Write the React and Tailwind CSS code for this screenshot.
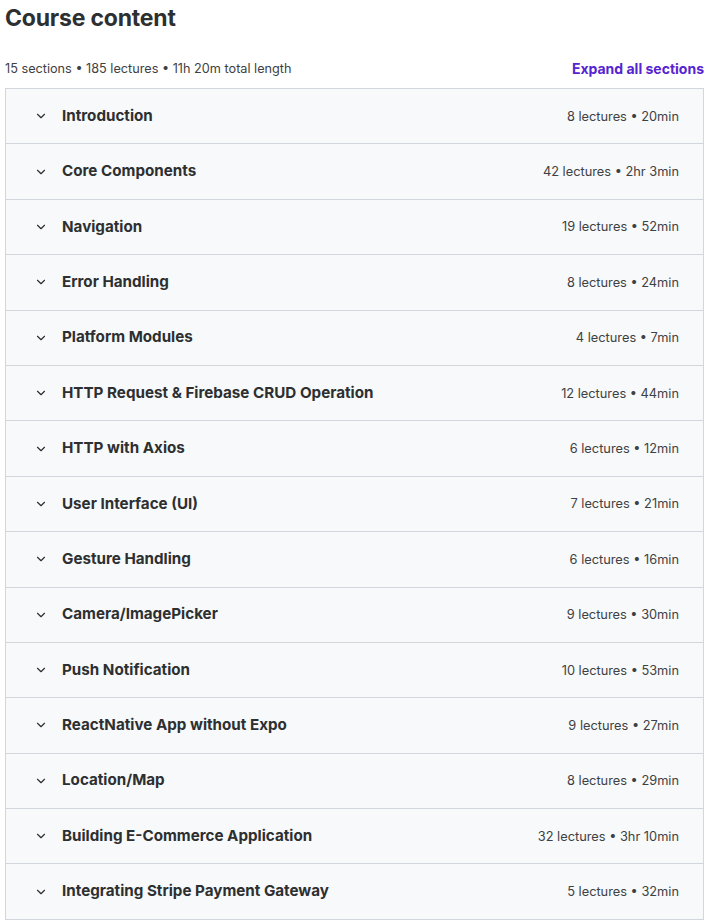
import React from 'react';
import { ChevronDown } from 'lucide-react';

const sections = [
  ['Introduction', '8 lectures • 20min'],
  ['Core Components', '42 lectures • 2hr 3min'],
  ['Navigation', '19 lectures • 52min'],
  ['Error Handling', '8 lectures • 24min'],
  ['Platform Modules', '4 lectures • 7min'],
  ['HTTP Request & Firebase CRUD Operation', '12 lectures • 44min'],
  ['HTTP with Axios', '6 lectures • 12min'],
  ['User Interface (UI)', '7 lectures • 21min'],
  ['Gesture Handling', '6 lectures • 16min'],
  ['Camera/ImagePicker', '9 lectures • 30min'],
  ['Push Notification', '10 lectures • 53min'],
  ['ReactNative App without Expo', '9 lectures • 27min'],
  ['Location/Map', '8 lectures • 29min'],
  ['Building E-Commerce Application', '32 lectures • 3hr 10min'],
  ['Integrating Stripe Payment Gateway', '5 lectures • 32min'],
];

const App = () => {
  return (
    <div className="pl-[5px] pr-[1px] text-[#2d2f31]" style={{ fontFamily: 'Inter, "Noto Sans", sans-serif' }}>
      <h2 className="text-[23px] font-bold leading-[36px] tracking-[-0.2px]">Course content</h2>

      <div className="flex items-center justify-between mt-[22px] mb-[9px]">
        <span className="text-[12.7px] text-[#3e4143]">15 sections • 185 lectures • 11h 20m total length</span>
        <button className="text-[14px] font-bold text-[#5624d0]">Expand all sections</button>
      </div>

      <div className="border border-[#d1d7dc] border-b-0">
        {sections.map(([title, meta]) => (
          <div
            key={title}
            className="flex items-center justify-between h-[55.4px] bg-[#f7f9fa] border-b border-[#d1d7dc] pl-[28px] pr-[24px]"
          >
            <div className="flex items-center gap-[14px]">
              <ChevronDown size={14} strokeWidth={2} className="text-[#2d2f31]" />
              <span className="text-[15.2px] font-bold">{title}</span>
            </div>
            <span className="text-[12.8px] text-[#3e4143]">{meta}</span>
          </div>
        ))}
      </div>
    </div>
  );
};

export default App;
